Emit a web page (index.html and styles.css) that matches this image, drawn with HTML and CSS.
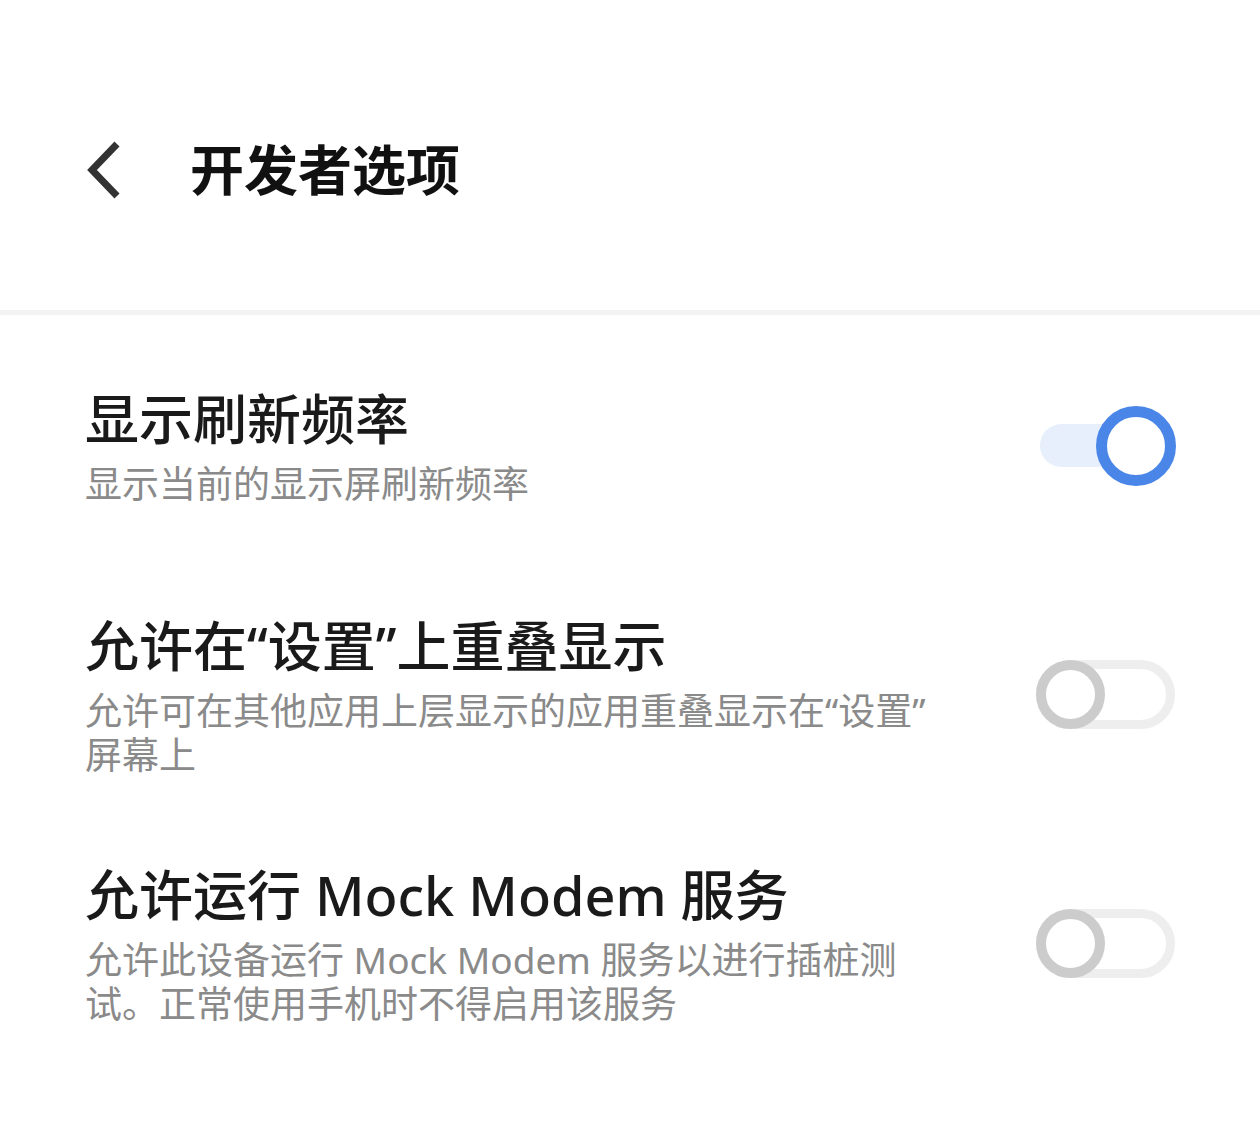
FILE: index.html
```html
<!DOCTYPE html>
<html lang="zh-CN">
<head>
<meta charset="utf-8">
<title>开发者选项</title>
<link rel="stylesheet" href="styles.css">
</head>
<body>
<div class="page">
  <header class="topbar">
    <span class="back" aria-label="返回">
      <svg width="40" height="60" viewBox="0 0 40 60"><polyline points="33,4 8,30 33,56" fill="none" stroke="#333333" stroke-width="7" stroke-linecap="butt" stroke-linejoin="miter"/></svg>
    </span>
    <h1 class="title">开发者选项</h1>
  </header>
  <div class="divider"></div>
  <ul class="list">
    <li class="item">
      <div class="text">
        <div class="item-title">显示刷新频率</div>
        <div class="item-sub">显示当前的显示屏刷新频率</div>
      </div>
      <div class="switch on"><span class="track"></span><span class="thumb"></span></div>
    </li>
    <li class="item">
      <div class="text">
        <div class="item-title">允许在“设置”上重叠显示</div>
        <div class="item-sub">允许可在其他应用上层显示的应用重叠显示在“设置”屏幕上</div>
      </div>
      <div class="switch off"><span class="track"></span><span class="thumb"></span></div>
    </li>
    <li class="item">
      <div class="text">
        <div class="item-title">允许运行 Mock Modem 服务</div>
        <div class="item-sub">允许此设备运行 Mock Modem 服务以进行插桩测试。正常使用手机时不得启用该服务</div>
      </div>
      <div class="switch off"><span class="track"></span><span class="thumb"></span></div>
    </li>
  </ul>
</div>
</body>
</html>
```

FILE: styles.css
```css
* { box-sizing: border-box; }
html, body { margin: 0; padding: 0; background: #ffffff; }
body {
  font-family: "Noto Sans", "Noto Sans CJK SC", sans-serif;
  width: 1260px;
  height: 1133px;
  overflow: hidden;
}
.page { width: 1260px; }
.topbar {
  height: 310px;
  display: flex;
  align-items: center;
  padding-left: 84px;
  padding-top: 30px;
}
.back { display: flex; width: 40px; height: 60px; margin-right: 66px; }
.title {
  margin: 0;
  font-size: 54px;
  font-weight: 700;
  color: #111111;
  line-height: 66px;
  letter-spacing: 0;
}
.divider { height: 5px; background: #f3f3f3; }
.list { list-style: none; margin: 0; padding: 6px 0 0 0; }
.item {
  min-height: 249px;
  display: flex;
  align-items: center;
  justify-content: space-between;
  padding: 0 84px 0 85px;
}
.text { width: 860px; }
.item-title {
  font-size: 54px;
  line-height: 66px;
  font-weight: 500;
  color: #1a1a1a;
  white-space: nowrap;
}
.item-sub {
  margin-top: 10px;
  font-size: 37px;
  line-height: 44px;
  color: #8a8a8a;
  font-weight: 400;
}
.switch { position: relative; width: 140px; height: 80px; flex: none; }
.switch .track { position: absolute; border-radius: 40px; }
.switch .thumb { position: absolute; border-radius: 50%; background: #ffffff; }
.switch.on .track {
  left: 4px; right: 4px; top: 18px; height: 43px;
  background: #e7effc;
}
.switch.on .thumb {
  right: 0; top: 0; width: 80px; height: 80px;
  border: 11px solid #4a86e8;
}
.switch.off .track {
  left: 0; right: 1px; top: 5px; height: 69px;
  border: 9px solid #eeeeee;
  background: #ffffff;
}
.switch.off .thumb {
  left: 0; top: 5px; width: 69px; height: 69px;
  border: 10px solid #cccccc;
}
```
